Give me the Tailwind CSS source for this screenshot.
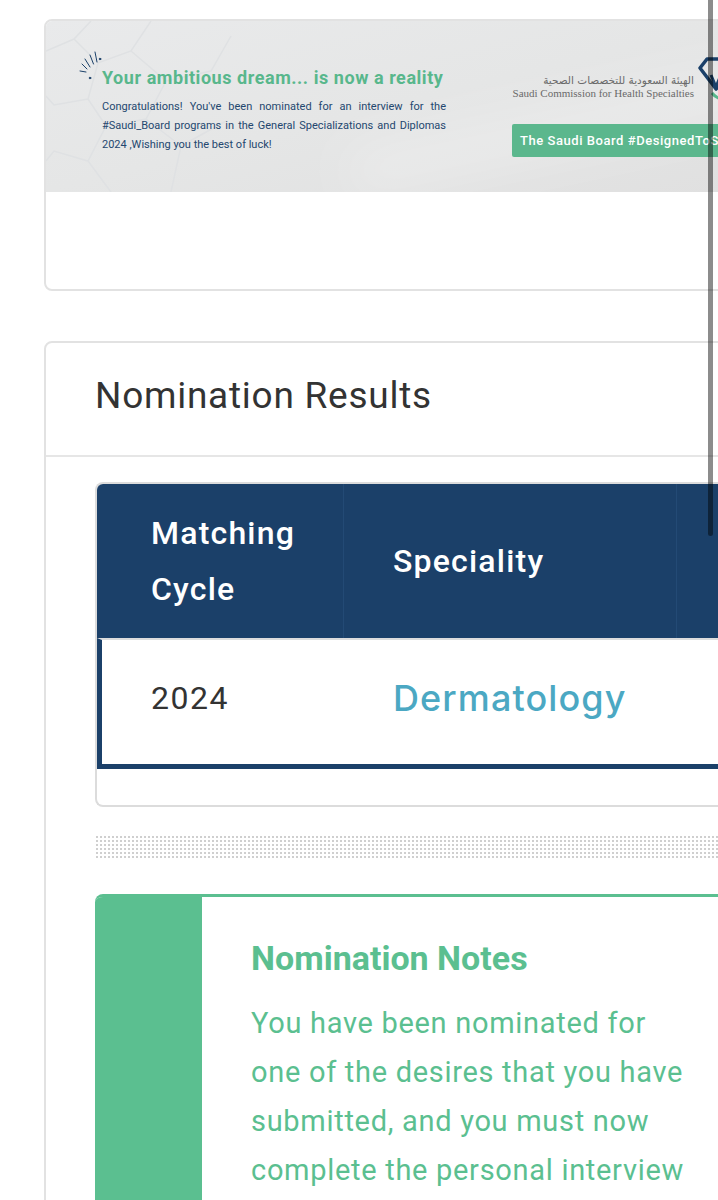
<!DOCTYPE html>
<html lang="en">
<head>
    <meta charset="UTF-8">
    <meta name="viewport" content="width=device-width, initial-scale=1.0">
    <title>Nomination Results</title>
    <script src="https://cdn.jsdelivr.net/npm/@tailwindcss/browser@4"></script>
</head>
<body class="relative w-[718px] h-[1200px] overflow-hidden bg-white font-['Roboto',sans-serif] text-[#333]">

    <!-- scrollbar overlay -->
    <div class="absolute left-[708px] top-0 w-[5px] h-[536px] rounded-b-full bg-black/45 z-10"></div>

    <div class="w-[718px] h-[1200px] overflow-hidden pl-[44px] pt-[19px]">

        <!-- banner card -->
        <div class="w-[700px] h-[272px] border-2 border-[#e2e2e2] rounded-lg overflow-hidden">
            <div class="relative h-[171px] bg-gradient-to-br from-[#e9eaeb] via-[#e5e6e6] to-[#e0e0e0] flex overflow-hidden">
                <div class="absolute left-[300px] top-[90px] w-[420px] h-[40px] -rotate-12 bg-white/30 blur-xl"></div>
                <svg class="absolute left-0 top-0" width="210" height="171" viewBox="0 0 210 171" fill="none" stroke="#dfe1e3" stroke-width="1.5">
                    <path d="M0 30 L28 18 L45 0 M28 18 L52 42 L85 30 L105 0 M52 42 L42 78 L60 105 L100 98 L120 60 L85 30 M42 78 L8 84 L0 75 M60 105 L42 140 L8 130 L0 140 M42 140 L65 171 M100 98 L135 125 L125 171 M120 60 L165 50 L185 15 M135 125 L180 100"/>
                </svg>
                <div class="relative w-[400px] pl-[56px] pt-[43px] shrink-0">
                    <svg class="absolute left-[33px] top-[30px]" width="26" height="34" viewBox="0 0 26 34" fill="none" stroke="#1b4069" stroke-width="1" stroke-linecap="round">
                        <path d="M16 1 L18 11 M11 4 L14.500 13 M6 8 L11 16 M3 13 L8 18 M1 20 L7 21"/>
                        <circle cx="21" cy="8" r="0.8" fill="#1b4069"/>
                        <circle cx="11" cy="27" r="0.8" fill="#1b4069"/>
                    </svg>
                    <h2 class="text-[18px] leading-[28px] font-bold tracking-[0.55px] text-[#58b78c] whitespace-nowrap">Your ambitious dream... is now a reality</h2>
                    <p class="mt-[5px] text-[11px] leading-[19px] font-normal text-[#24476f] text-justify">Congratulations! You've been nominated for an interview for the #Saudi_Board programs in the General Specializations and Diplomas 2024 ,Wishing you the best of luck!</p>
                </div>
                <div class="relative w-[270px] pl-[66px] shrink-0">
                    <div class="w-[182px] pt-[53px] text-right">
                        <p class="text-[10.5px] leading-[13px] text-[#6a6a6a] font-['DejaVu_Sans',sans-serif]" dir="rtl">الهيئة السعودية للتخصصات الصحية</p>
                        <p class="text-[11px] leading-[13px] text-[#6a6a6a] font-['Liberation_Serif',serif] whitespace-nowrap">Saudi Commission for Health Specialties</p>
                    </div>
                    <svg class="absolute left-[252px] top-[36px]" width="40" height="46" viewBox="0 0 40 46" fill="none">
                        <path d="M2 11 L9 2 L30 2 L36 12 L18 32 Z" stroke="#1b4069" stroke-width="3.5" stroke-linejoin="round"/>
                        <path d="M13 18 L18 30 L22 20 L26 30" stroke="#1b4069" stroke-width="3"/>
                        <path d="M14 36 Q20 44 32 42" stroke="#58b78c" stroke-width="3"/>
                    </svg>
                    <div class="w-[230px] h-[33px] mt-[24px] pl-[8px] bg-[#5bb78d] rounded-[2px] text-white text-[13px] leading-[33px] font-medium tracking-[0.55px] whitespace-nowrap overflow-hidden">The Saudi Board #DesignedToShine</div>
                </div>
            </div>
        </div>

        <!-- results card -->
        <div class="w-[700px] mt-[50px] border-2 border-[#e2e2e2] rounded-lg h-[1000px]">
            <div class="h-[114px] border-b-2 border-[#e6e6e6] pl-[49px] pb-[6px] flex items-center">
                <h1 class="text-[37px] font-normal text-[#333] tracking-[0.75px]">Nomination Results</h1>
            </div>

            <div class="ml-[49px] mt-[25px] h-[325px] border-2 border-[#dcdcdc] border-r-0 rounded-l-lg overflow-hidden">
                <div class="h-[154px] bg-[#1b4069] flex text-white font-medium text-[32px] tracking-[1.2px] leading-[56px]">
                    <div class="w-[247px] pl-[54px] flex items-center border-r border-[#234a75]">
                        <span>Matching<br>Cycle</span>
                    </div>
                    <div class="w-[333px] pl-[49px] flex items-center border-r border-[#234a75]">Speciality</div>
                </div>
                <div class="h-[131px] border-t-2 border-t-[#dddddd] border-l-[5px] border-b-[5px] border-l-[#1b4069] border-b-[#1b4069] flex items-center pb-[8px]">
                    <div class="w-[241px] pl-[49px] text-[32px] tracking-[1.5px] text-[#333]">2024</div>
                    <div class="pl-[50px] text-[36px] font-medium tracking-[1.1px] text-[#4ba8c3] font-['Inter',sans-serif]">Dermatology</div>
                </div>
            </div>

            <!-- dotted band -->
            <div class="ml-[49px] mt-[28px] h-[23px] bg-[radial-gradient(#cfcfcf_1.2px,transparent_1.3px)] bg-[length:4px_4px]"></div>

            <!-- notes -->
            <div class="ml-[49px] mt-[36px] h-[400px] border-t-[3px] border-[#5bbf90] rounded-tl-lg flex overflow-hidden">
                <div class="w-[107px] bg-[#5bbf90] shrink-0"></div>
                <div class="w-[488px] pl-[49px] pt-[39px] text-[#5bbf90]">
                    <h3 class="text-[34px] leading-[44px] font-bold">Nomination Notes</h3>
                    <p class="mt-[19px] text-[29px] leading-[49px] tracking-[0.7px] whitespace-nowrap">You have been nominated for<br>one of the desires that you have<br>submitted, and you must now<br>complete the personal interview</p>
                </div>
            </div>
        </div>
    </div>
</body>
</html>
